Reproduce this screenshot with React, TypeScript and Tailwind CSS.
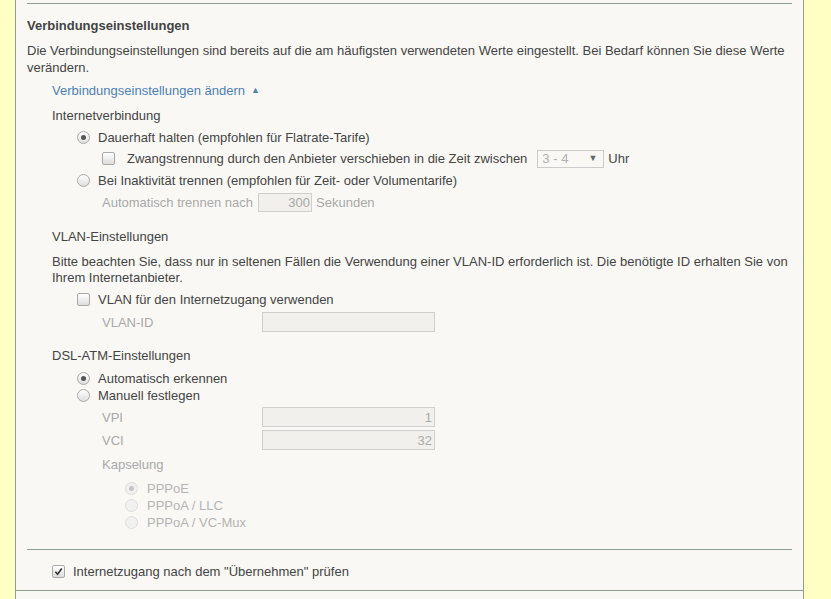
import React from "react";

const font = { fontFamily: '"Liberation Sans", Arial, sans-serif' };

function Radio({ checked, disabled }: { checked?: boolean; disabled?: boolean }) {
  return (
    <span
      className={`inline-flex h-[13px] w-[13px] shrink-0 items-center justify-center rounded-full border ${
        disabled ? "border-[#dddddd] bg-[#f1f1f1]" : "border-[#a9a9a9] bg-gradient-to-b from-[#ffffff] to-[#dedede]"
      }`}
    >
      {checked && (
        <span className={`h-[5px] w-[5px] rounded-full ${disabled ? "bg-[#c4c4c4]" : "bg-[#555555]"}`} />
      )}
    </span>
  );
}

function Check({ checked }: { checked?: boolean }) {
  return (
    <span className="inline-flex h-[13px] w-[13px] shrink-0 items-center justify-center rounded-[2px] border border-[#a9a9a9] bg-gradient-to-b from-[#ffffff] to-[#dcdcdc]">
      {checked && (
        <svg width="9" height="9" viewBox="0 0 10 10">
          <path d="M1.5 5.2 L4 8 L8.6 1.6" fill="none" stroke="#333" strokeWidth="1.8" />
        </svg>
      )}
    </span>
  );
}

function Field({ value, w }: { value?: string; w: string }) {
  return (
    <span
      className={`${w} flex h-[20px] items-center justify-end border border-[#cfcfcf] bg-[#f1f0ec] pr-[2px] text-[13px] text-[#aaaaaa]`}
    >
      {value}
    </span>
  );
}

export default function App() {
  return (
    <div className="flex h-[599px] w-[831px] overflow-hidden bg-[#ffffc4] text-[13px] text-[#444444]" style={font}>
      <div className="w-[15px] shrink-0" />
      <div className="flex w-[789px] shrink-0 flex-col border-x border-[#8e9e8e] bg-[#f9f8f4]">
        <div className="flex flex-col px-[11px] leading-[17px]">
          <div className="mt-[3px] border-t border-[#8e9e8e]" />
          <h2 className="mt-[13px] font-bold">Verbindungseinstellungen</h2>
          <p className="mt-[8px]">
            Die Verbindungseinstellungen sind bereits auf die am häufigsten verwendeten Werte eingestellt. Bei Bedarf
            können Sie diese Werte verändern.
          </p>

          <div className="ml-[25px] flex flex-col">
            <div className="mt-[6px] flex items-center gap-[6px] text-[#4d7fb8]">
              Verbindungseinstellungen ändern
              <span className="text-[9px] leading-none">▲</span>
            </div>

            <div className="mt-[8px]">Internetverbindung</div>

            <div className="ml-[25px] flex flex-col">
              <label className="mt-[5px] flex items-center gap-[8px]">
                <Radio checked />
                Dauerhaft halten (empfohlen für Flatrate-Tarife)
              </label>
              <label className="mt-[4px] ml-[25px] flex h-[17px] items-center">
                <Check />
                <span className="ml-[12px]">Zwangstrennung durch den Anbieter verschieben in die Zeit zwischen</span>
                <span className="ml-[10px] flex h-[18px] w-[67px] items-center justify-between border border-[#cccccc] bg-[#f9f8f4] pl-[4px] pr-[6px] text-[#b0b0b0]">
                  3 - 4
                  <span className="text-[9px] text-[#666666]">▼</span>
                </span>
                <span className="ml-[4px]">Uhr</span>
              </label>
              <label className="mt-[5px] flex items-center gap-[8px]">
                <Radio />
                Bei Inaktivität trennen (empfohlen für Zeit- oder Volumentarife)
              </label>
              <div className="mt-[4px] ml-[25px] flex h-[19px] items-center text-[#a9a9a9]">
                Automatisch trennen nach
                <span className="ml-[5px] flex h-[19px] w-[54px] items-center justify-end border border-[#cfcfcf] bg-[#f1f0ec] pr-[1px]">
                  300
                </span>
                <span className="ml-[4px]">Sekunden</span>
              </div>
            </div>
          </div>

          <div className="mt-[16px] ml-[25px]">VLAN-Einstellungen</div>
          <p className="mt-[9px] ml-[25px] leading-[16px]">
            Bitte beachten Sie, dass nur in seltenen Fällen die Verwendung einer VLAN-ID erforderlich ist. Die benötigte
            ID erhalten Sie von Ihrem Internetanbieter.
          </p>
          <div className="ml-[50px] flex flex-col">
            <label className="mt-[5px] flex items-center gap-[8px]">
              <Check />
              VLAN für den Internetzugang verwenden
            </label>
            <div className="mt-[4px] flex h-[20px] items-center text-[#a9a9a9]">
              <span className="ml-[25px] w-[160px]">VLAN-ID</span>
              <Field w="w-[173px]" />
            </div>
          </div>

          <div className="mt-[15px] ml-[25px]">DSL-ATM-Einstellungen</div>
          <div className="ml-[50px] flex flex-col">
            <label className="mt-[6px] flex items-center gap-[8px]">
              <Radio checked />
              Automatisch erkennen
            </label>
            <label className="flex items-center gap-[8px]">
              <Radio />
              Manuell festlegen
            </label>
            <div className="mt-[3px] flex h-[20px] items-center text-[#a9a9a9]">
              <span className="ml-[25px] w-[160px]">VPI</span>
              <Field w="w-[173px]" value="1" />
            </div>
            <div className="mt-[3px] flex h-[20px] items-center text-[#a9a9a9]">
              <span className="ml-[25px] w-[160px]">VCI</span>
              <Field w="w-[173px]" value="32" />
            </div>
            <div className="mt-[6px] ml-[25px] text-[#a9a9a9]">Kapselung</div>
            <div className="mt-[7px] ml-[48px] flex flex-col text-[#b4b4b4]">
              <label className="flex items-center gap-[9px]">
                <Radio checked disabled />
                PPPoE
              </label>
              <label className="flex items-center gap-[9px]">
                <Radio disabled />
                PPPoA / LLC
              </label>
              <label className="flex items-center gap-[9px]">
                <Radio disabled />
                PPPoA / VC-Mux
              </label>
            </div>
          </div>

          <div className="mt-[18px] border-t border-[#8e9e8e]" />
          <label className="mt-[13px] ml-[25px] flex items-center gap-[8px]">
            <Check checked />
            Internetzugang nach dem "Übernehmen" prüfen
          </label>
        </div>
        <div className="mt-[10px] border-t border-[#8e9e8e]" />
      </div>
    </div>
  );
}
